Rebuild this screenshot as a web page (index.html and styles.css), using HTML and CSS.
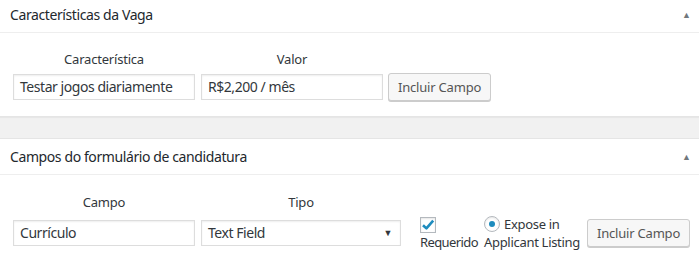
FILE: index.html
```html
<!DOCTYPE html>
<html lang="pt-BR">
<head>
  <meta charset="UTF-8" />
  <title>Vaga</title>
  <link rel="stylesheet" href="styles.css">
</head>
<body>
  <div class="postbox first">
    <div class="postbox-header">
      <h2>Características da Vaga</h2>
      <span class="toggle">&#9650;</span>
    </div>
    <div class="inside">
      <div class="fields row-one">
        <div class="col-label">Característica</div>
        <div class="col-label">Valor</div>
        <div></div>
        <div class="text-input">Testar jogos diariamente</div>
        <div class="text-input">R$2,200 / mês</div>
        <button class="button">Incluir Campo</button>
      </div>
    </div>
  </div>

  <div class="postbox last">
    <div class="postbox-header">
      <h2>Campos do formulário de candidatura</h2>
      <span class="toggle">&#9650;</span>
    </div>
    <div class="inside">
      <div class="fields row-two">
        <div class="col-label">Campo</div>
        <div class="col-label">Tipo</div>
        <div></div>
        <div></div>
        <div></div>
        <div class="text-input">Currículo</div>
        <div class="text-input select">Text Field<span class="caret">&#9660;</span></div>
        <div class="check-cell">
          <span class="checkbox">
            <svg width="14" height="14" viewBox="0 0 14 14"><path d="M2 7.2 L5.4 10.4 L12.2 2.6" fill="none" stroke="#1e8cbe" stroke-width="2.6" stroke-linejoin="round"/></svg>
          </span>
          <span class="opt-text tight">Requerido</span>
        </div>
        <div class="radio-cell">
          <div class="radio-line"><span class="radio"><span class="dot"></span></span>Expose in</div>
          <div class="opt-text">Applicant Listing</div>
        </div>
        <button class="button">Incluir Campo</button>
      </div>
    </div>
  </div>
</body>
</html>
```

FILE: styles.css
```css
html, body {
  margin: 0;
  padding: 0;
  background: #f1f1f1;
  font-family: "Noto Sans", "Open Sans", sans-serif;
  color: #23282d;
  overflow: hidden;
}

.postbox {
  background: #fff;
  border-top: 1px solid #e5e5e5;
  border-bottom: 1px solid #e5e5e5;
  box-shadow: 0 1px 1px rgba(0, 0, 0, 0.04);
}

.postbox.first {
  margin-top: -4px;
  margin-bottom: 21px;
}

.postbox.last {
  border-bottom: 0;
  box-shadow: none;
}

.postbox-header {
  display: flex;
  align-items: center;
  justify-content: space-between;
  height: 35px;
  border-bottom: 1px solid #eee;
  padding: 0 8px 0 10px;
}

.postbox-header h2 {
  margin: 0;
  font-size: 14px;
  font-weight: 400;
  letter-spacing: -0.4px;
}

.toggle {
  font-size: 9px;
  color: #72777c;
}

.inside {
  padding: 16px 13px 15px;
}

.postbox.last .inside {
  padding-bottom: 16px;
}

.fields {
  display: grid;
  align-items: center;
  justify-content: start;
}

.row-one {
  grid-template-columns: 182px 182px auto;
  column-gap: 6px;
  row-gap: 4px;
}

.row-two {
  grid-template-columns: 182px 200px auto auto auto;
  column-gap: 6px;
  row-gap: 2px;
  padding-top: 1px;
}

.col-label {
  text-align: center;
  font-size: 13px;
  line-height: 20px;
  color: #32373c;
  letter-spacing: -0.2px;
}

.text-input {
  box-sizing: border-box;
  height: 26px;
  border: 1px solid #ddd;
  box-shadow: inset 0 1px 2px rgba(0, 0, 0, 0.07);
  padding: 0 6px;
  font-size: 14px;
  line-height: 24px;
  color: #32373c;
  letter-spacing: -0.45px;
  white-space: nowrap;
}

.select {
  display: flex;
  justify-content: space-between;
  align-items: center;
}

.caret {
  font-size: 9px;
  color: #32373c;
  margin-right: 2px;
}

.button {
  box-sizing: border-box;
  height: 28px;
  padding: 0 9px;
  font-family: inherit;
  font-size: 13px;
  color: #555;
  background: #f7f7f7;
  border: 1px solid #ccc;
  border-radius: 3px;
  box-shadow: 0 1px 0 #ccc;
  letter-spacing: -0.2px;
  white-space: nowrap;
  justify-self: start;
}

.row-one .button {
  margin-left: -1px;
}

.row-two .button {
  margin-left: 1px;
}

.check-cell {
  display: flex;
  flex-direction: column;
  align-items: flex-start;
  margin-left: 13px;
  padding-top: 3px;
}

.checkbox {
  box-sizing: border-box;
  width: 16px;
  height: 16px;
  border: 1px solid #b4b9be;
  box-shadow: inset 0 1px 2px rgba(0, 0, 0, 0.1);
  display: flex;
  align-items: center;
  justify-content: center;
}

.opt-text {
  font-size: 13px;
  line-height: 18px;
  color: #32373c;
  letter-spacing: -0.3px;
  white-space: nowrap;
}

.opt-text.tight {
  letter-spacing: -0.6px;
}

.radio-cell {
  display: flex;
  flex-direction: column;
}

.radio-line {
  display: flex;
  align-items: center;
  gap: 4px;
  font-size: 13px;
  line-height: 18px;
  color: #32373c;
  letter-spacing: -0.3px;
}

.radio {
  box-sizing: border-box;
  width: 16px;
  height: 16px;
  border: 1px solid #b4b9be;
  border-radius: 50%;
  box-shadow: inset 0 1px 2px rgba(0, 0, 0, 0.1);
  display: flex;
  align-items: center;
  justify-content: center;
}

.dot {
  width: 6px;
  height: 6px;
  border-radius: 50%;
  background: #1e8cbe;
}
```
